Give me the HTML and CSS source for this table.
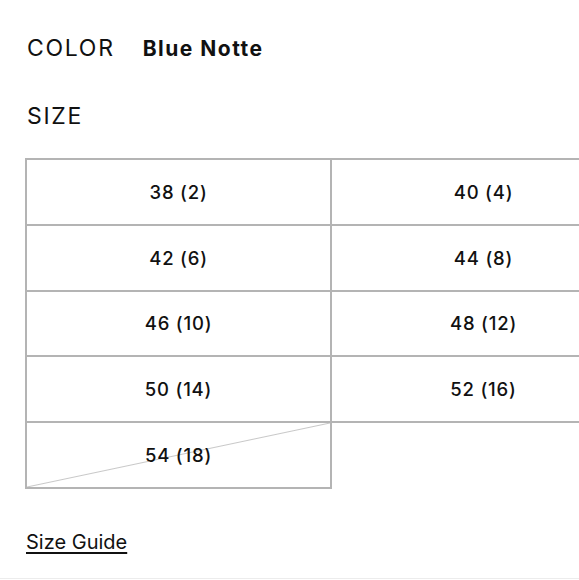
FILE: index.html
```html
<!DOCTYPE html>
<html lang="en">
<head>
<meta charset="utf-8">
<title>Size selector</title>
<link rel="stylesheet" href="styles.css">
</head>
<body>
<div class="panel">
  <div class="color-row">
    <span class="label">COLOR</span>
    <span class="color-value">Blue Notte</span>
  </div>
  <div class="size-title label">SIZE</div>
  <div class="size-grid">
    <div class="cell">38 (2)</div>
    <div class="cell">40 (4)</div>
    <div class="cell">42 (6)</div>
    <div class="cell">44 (8)</div>
    <div class="cell">46 (10)</div>
    <div class="cell">48 (12)</div>
    <div class="cell">50 (14)</div>
    <div class="cell">52 (16)</div>
    <div class="cell cell-sold">54 (18)</div>
  </div>
  <div class="guide-row"><a class="guide" href="#">Size Guide</a></div>
</div>
<div class="footer-rule"></div>
</body>
</html>
```

FILE: styles.css
```css
html, body {
  margin: 0;
  padding: 0;
  overflow: hidden;
  background: #fff;
}
body {
  width: 579px;
  font-family: Inter, "Liberation Sans", sans-serif;
  color: #111;
}
.panel {
  padding: 34px 0 0 25px;
  height: 578px;
  box-sizing: border-box;
}
.color-row {
  display: flex;
  align-items: baseline;
  gap: 28px;
  padding-left: 2px;
  height: 30px;
}
.label {
  font-size: 23px;
  font-weight: 400;
  letter-spacing: 1.7px;
}
.color-value {
  font-size: 21px;
  font-weight: 700;
  letter-spacing: 1.5px;
}
.size-title {
  margin-top: 38px;
  padding-left: 2px;
  height: 30px;
}
.size-grid {
  margin-top: 26px;
  display: grid;
  grid-template-columns: 305px 305px;
  grid-auto-rows: 65.8px;
  width: 612px;
  border-top: 2px solid #b4b4b4;
  border-left: 2px solid #b4b4b4;
}
.cell {
  border-right: 2px solid #b4b4b4;
  border-bottom: 2px solid #b4b4b4;
  display: flex;
  align-items: center;
  justify-content: center;
  font-size: 18.5px;
  font-weight: 550;
  letter-spacing: 0.8px;
}
.cell-sold {
  background: linear-gradient(to bottom right, transparent calc(50% - 1px), #c8c8c8 50%, transparent calc(50% + 1px));
}
.guide-row {
  margin-top: 41px;
  padding-left: 1px;
}
.guide {
  font-size: 20px;
  color: #111;
  text-decoration: underline;
  text-decoration-thickness: 2px;
  text-underline-offset: 3px;
}
.footer-rule {
  height: 1px;
  background: #ececec;
}
```
